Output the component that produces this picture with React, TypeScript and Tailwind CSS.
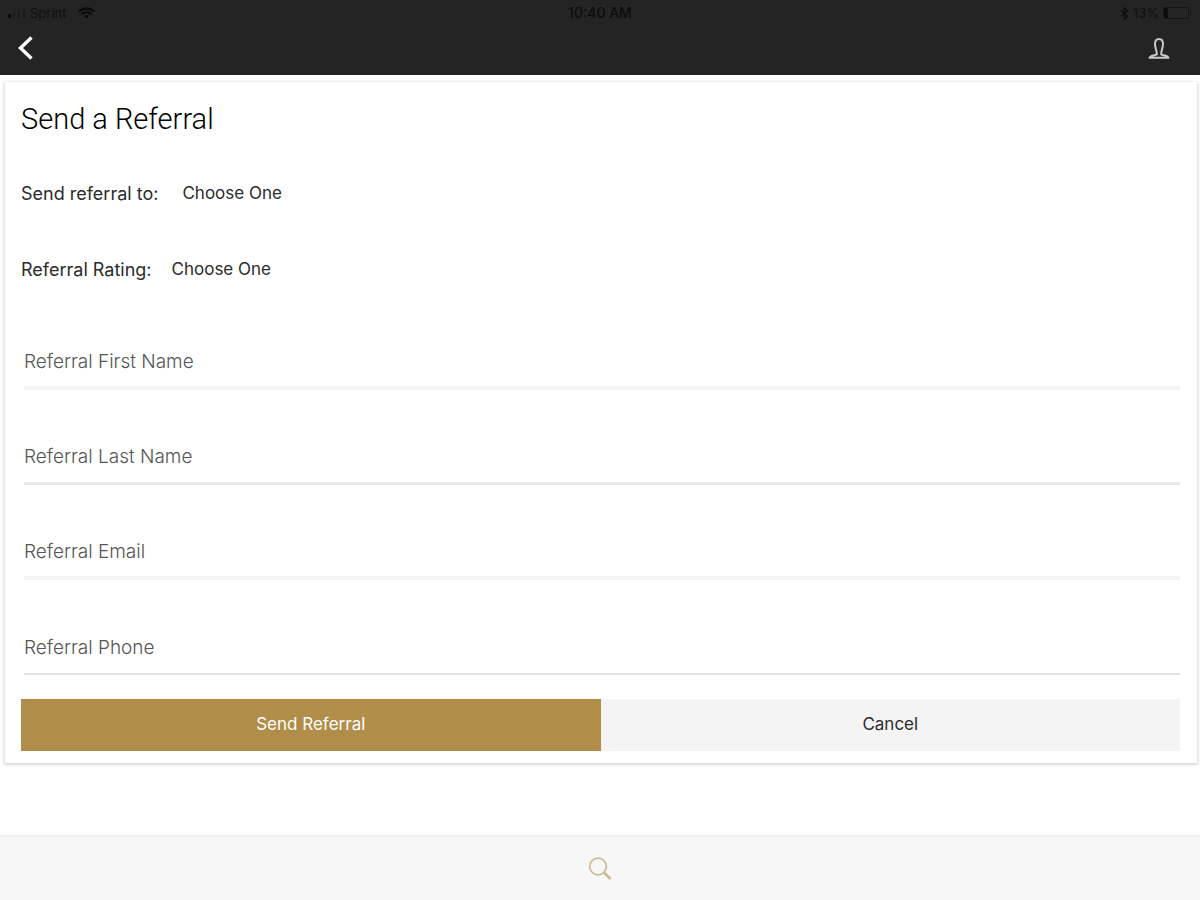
import { useState } from 'react'

const fields = [
  { id: 'first-name', label: 'Referral First Name', type: 'text', line: 'border-b-4 border-[#f4f4f4]' },
  { id: 'last-name', label: 'Referral Last Name', type: 'text', line: 'border-b-3 border-[#e8e8e8]' },
  { id: 'email', label: 'Referral Email', type: 'email', line: 'border-b-4 border-[#f4f4f4]' },
  { id: 'phone', label: 'Referral Phone', type: 'tel', line: 'border-b-2 border-[#e2e2e2]' },
]

const pickers = [
  { id: 'recipient', label: 'Send referral to:', gap: 'gap-6', options: ['Choose One', 'Agent', 'Lender'] },
  { id: 'rating', label: 'Referral Rating:', gap: 'gap-5', options: ['Choose One', 'Hot', 'Warm', 'Cold'] },
]

function StatusBar() {
  return (
    <div className="grid h-[26px] grid-cols-3 items-center px-2 text-[13px] leading-6 text-[#0c0c0c]">
      <div className="flex items-center gap-1">
        <svg width="18" height="9" viewBox="0 0 18 9" fill="currentColor" aria-hidden="true">
          <rect x="0" y="5" width="3" height="4" />
          <rect x="5" y="3" width="2" height="6" opacity=".35" />
          <rect x="10" y="2" width="2" height="7" opacity=".35" />
          <rect x="15" y="0" width="2" height="9" opacity=".35" />
        </svg>
        <span className="opacity-80">Sprint</span>
        <svg className="ml-2" width="17" height="12" viewBox="0 0 17 12" fill="none" stroke="currentColor" strokeWidth="2.4" aria-hidden="true">
          <path d="M1 4.5C5.2.4 11.8.4 16 4.5" />
          <path d="M3.8 7.2C6.5 4.7 10.5 4.7 13.2 7.2" />
          <path d="M6 9L8.5 11.5L11 9C9.5 7.8 7.5 7.8 6 9Z" fill="currentColor" stroke="none" />
        </svg>
      </div>
      <span className="text-center text-sm font-medium">10:40 AM</span>
      <div className="flex items-center justify-end gap-1">
        <svg width="9" height="13" viewBox="0 0 9 13" fill="none" stroke="currentColor" strokeWidth="1.3" aria-hidden="true">
          <path d="M1 3.5L7.5 9.2L4.5 12V1L7.5 3.8L1 9.5" />
        </svg>
        <span className="opacity-80">13%</span>
        <svg width="29" height="12" viewBox="0 0 29 12" fill="none" stroke="currentColor" aria-hidden="true">
          <rect x=".5" y=".5" width="25" height="11" rx="2" opacity=".6" />
          <rect x="1" y="1" width="4" height="10" fill="currentColor" stroke="none" />
          <path d="M27.5 4V8" opacity=".6" />
        </svg>
      </div>
    </div>
  )
}

export default function App() {
  const [values, setValues] = useState<Record<string, string>>({})

  return (
    <div className="flex min-h-screen flex-col bg-white font-['Inter',sans-serif] text-[#2b2b2b]">
      <header className="bg-[#242424]">
        <StatusBar />
        <nav className="flex h-[49px] items-center justify-between px-4 pb-1">
          <button type="button" aria-label="Back" className="text-white">
            <svg width="20" height="26" viewBox="0 0 20 26" fill="none" stroke="currentColor" strokeWidth="3.4">
              <path d="M15.5 1.5L4.5 12L15.5 22.5" />
            </svg>
          </button>
          <button type="button" aria-label="Profile" className="mr-3.5 text-[#c8c8c8]">
            <svg width="22" height="24" viewBox="0 0 22 24" fill="none" stroke="currentColor" strokeWidth="2" strokeLinejoin="round">
              <path d="M8.8 17.5C9.2 14 7 11.5 7 7C7 3.5 8.4 2 11 2S15 3.5 15 7C15 11.500 12.800 14 13.200 17.500C15 18.500 19.500 18.300 20.500 20.800H1.500C2.500 18.300 7 18.500 8.800 17.500Z" />
            </svg>
          </button>
        </nav>
      </header>

      <main className="flex-1 pt-[7px] pr-[3px] pl-[5px]">
        <form
          className="bg-white pt-4 pr-[17px] pb-3 pl-4 shadow-[0_1px_3px_1px_rgba(0,0,0,0.16)]"
          onSubmit={(e) => e.preventDefault()}
        >
          <h1 className="font-['Roboto',sans-serif] text-[29px] leading-[42px] font-light text-black">
            Send a Referral
          </h1>

          <div className="mt-4">
            {pickers.map((p) => (
              <div key={p.id} className={`flex h-[76px] items-center ${p.gap}`}>
                <label htmlFor={p.id} className="text-lg">
                  {p.label}
                </label>
                <select id={p.id} className="appearance-none bg-transparent text-[17px] outline-none">
                  {p.options.map((o) => (
                    <option key={o}>{o}</option>
                  ))}
                </select>
              </div>
            ))}
          </div>

          <div className="mt-7 flex flex-col gap-[41px] pl-[3px]">
            {fields.map((f) => (
              <input
                key={f.id}
                id={f.id}
                type={f.type}
                aria-label={f.label}
                placeholder={f.label}
                value={values[f.id] ?? ''}
                onChange={(e) => setValues({ ...values, [f.id]: e.target.value })}
                className={`h-[54px] w-full text-[19px] font-light outline-none placeholder:text-[#555] ${f.line}`}
              />
            ))}
          </div>

          <div className="mt-6 grid grid-cols-2 text-[17px]">
            <button type="submit" className="h-[52px] bg-[#b08d48] text-white">
              Send Referral
            </button>
            <button type="button" className="h-[52px] bg-[#f4f4f4]">
              Cancel
            </button>
          </div>
        </form>
      </main>

      <footer className="flex h-[65px] items-center justify-center border-t-2 border-[#eee] bg-[#f7f7f7]">
        <button type="button" aria-label="Search" className="text-[#cdbb93]">
          <svg width="24" height="24" viewBox="0 0 24 24" fill="none" stroke="currentColor">
            <circle cx="10" cy="9.5" r="8.3" strokeWidth="1.7" />
            <path d="M16 15.5L22.5 22" strokeWidth="2.6" />
          </svg>
        </button>
      </footer>
    </div>
  )
}
